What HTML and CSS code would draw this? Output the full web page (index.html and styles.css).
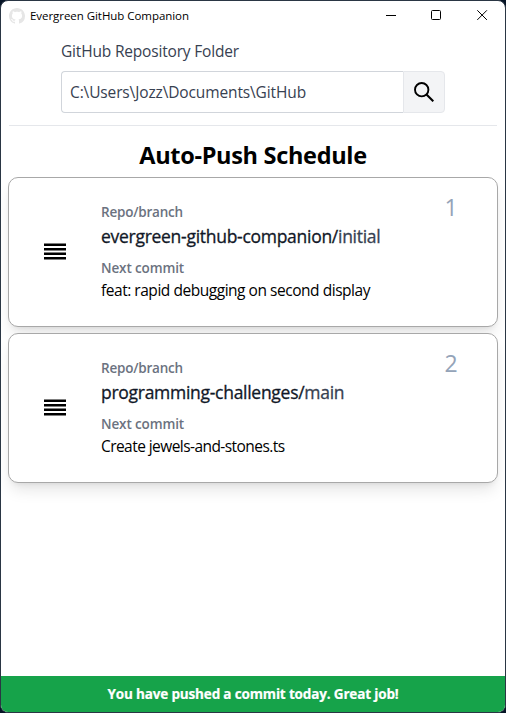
FILE: index.html
```
<!DOCTYPE html>
<html lang="en">
<head>
<meta charset="utf-8">
<title>Evergreen GitHub Companion</title>
<link rel="stylesheet" href="styles.css">
</head>
<body>
<div class="window">
  <header class="titlebar">
    <svg class="logo" viewBox="0 0 16 16" fill="#e6e6e6"><path d="M8 0C3.58 0 0 3.58 0 8c0 3.54 2.29 6.53 5.47 7.59.4.07.55-.17.55-.38 0-.19-.01-.82-.01-1.49-2.01.37-2.53-.49-2.69-.94-.09-.23-.48-.94-.82-1.13-.28-.15-.68-.52-.01-.53.63-.01 1.08.58 1.23.82.72 1.21 1.87.87 2.33.66.07-.52.28-.87.51-1.07-1.78-.2-3.64-.89-3.64-3.95 0-.87.31-1.59.82-2.15-.08-.2-.36-1.02.08-2.12 0 0 .67-.21 2.2.82.64-.18 1.32-.27 2-.27s1.36.09 2 .27c1.53-1.04 2.2-.82 2.2-.82.44 1.1.16 1.92.08 2.12.51.56.82 1.27.82 2.15 0 3.07-1.87 3.75-3.65 3.95.29.25.54.73.54 1.48 0 1.07-.01 1.93-.01 2.2 0 .21.15.46.55.38A8.01 8.01 0 0 0 16 8c0-4.42-3.58-8-8-8z"/></svg>
    <span class="app-name">Evergreen GitHub Companion</span>
    <div class="controls">
      <svg viewBox="0 0 46 30"><path d="M16 14.5h10" shape-rendering="crispEdges"/></svg>
      <svg viewBox="0 0 46 30"><rect x="15.5" y="9.5" width="9" height="9" rx="1"/></svg>
      <svg viewBox="0 0 46 30"><path d="M15.3 9.3l9.6 9.6M24.9 9.3l-9.6 9.6"/></svg>
    </div>
  </header>
  <section class="folder">
    <label class="folder-label" for="path">GitHub Repository Folder</label>
    <div class="field">
      <div class="path" id="path">C:\Users\Jozz\Documents\GitHub</div>
      <button class="browse" aria-label="Browse">
        <svg viewBox="0 0 20 20" fill="none" stroke="#000" stroke-width="1.9"><circle cx="7.7" cy="7.7" r="6.7"/><path d="M12.5 12.5l6.8 6.8" stroke-width="2.1"/></svg>
      </button>
    </div>
  </section>
  <hr class="divider">
  <h1 class="heading">Auto-Push Schedule</h1>
  <main class="cards">
    <article class="card">
      <svg class="handle" viewBox="0 0 22 17"><path d="M0 1.8h22M0 6.3h22M0 10.8h22M0 15.3h22"/></svg>
      <div class="info">
        <div class="caption">Repo/branch</div>
        <div class="repo">evergreen-github-companion/<span class="branch">initial</span></div>
        <div class="caption next">Next commit</div>
        <div class="commit">feat: rapid debugging on second display</div>
      </div>
      <div class="order">1</div>
    </article>
    <article class="card">
      <svg class="handle" viewBox="0 0 22 17"><path d="M0 1.8h22M0 6.3h22M0 10.8h22M0 15.3h22"/></svg>
      <div class="info">
        <div class="caption">Repo/branch</div>
        <div class="repo">programming-challenges/<span class="branch">main</span></div>
        <div class="caption next">Next commit</div>
        <div class="commit create">Create jewels-and-stones.ts</div>
      </div>
      <div class="order">2</div>
    </article>
  </main>
  <footer class="status">You have pushed a commit today. Great job!</footer>
</div>
</body>
</html>
```
FILE: styles.css
```
* { box-sizing: border-box; }
body { margin: 0; background: #061426; font-family: "Open Sans", sans-serif; color: #000; }
.window {
  height: 713px;
  display: flex;
  flex-direction: column;
  background: #fff;
  border: 1px solid #2a3644;
  border-radius: 8px;
  overflow: hidden;
}
.titlebar { display: flex; align-items: center; height: 30px; padding-left: 8px; flex: none; }
.logo { width: 16px; height: 16px; }
.app-name { margin: -1px 0 0 5px; font-size: 11.5px; letter-spacing: -0.049px; white-space: nowrap; }
.controls { display: flex; margin-left: auto; margin-right: -3px; }
.controls svg { width: 46px; height: 30px; fill: none; stroke: #000; stroke-width: 1; }
.folder { margin: 8px 60px 0; }
.folder-label {
  display: block;
  height: 24px;
  font-size: 15.5px;
  line-height: 24px;
  letter-spacing: -0.178px;
  color: #374151;
}
.field { display: flex; width: 384px; height: 42px; margin-top: 8px; }
.path {
  flex: 1;
  padding-left: 8px;
  border: 1px solid #d1d5db;
  border-right: 0;
  border-radius: 4px 0 0 4px;
  font-size: 15.5px;
  line-height: 41px;
  letter-spacing: -0.127px;
  color: #374151;
}
.browse {
  display: flex;
  align-items: center;
  justify-content: center;
  width: 42px;
  padding: 0;
  border: 1px solid #e5e7eb;
  border-radius: 0 4px 4px 0;
  background: #f3f4f6;
}
.browse svg { width: 20px; height: 20px; }
.divider { width: 488px; height: 1px; margin: 12px 0 0 8px; border: 0; background: #e5e7eb; flex: none; }
.heading {
  margin: 13px 0 1px;
  font-size: 23.5px;
  line-height: 32px;
  letter-spacing: -0.313px;
  text-align: center;
}
.cards { display: flex; flex-direction: column; gap: 6px; padding: 5px 7px 0; }
.card {
  display: flex;
  height: 150px;
  border: 1px solid #a8a8a8;
  border-radius: 10px;
  background: #fff;
  box-shadow: 0 10px 15px -3px rgba(0, 0, 0, .1), 0 4px 6px -4px rgba(0, 0, 0, .1);
}
.handle { width: 22px; height: 17px; margin: 65px 35px 0; stroke: #000; stroke-width: 2.5; }
.info { flex: 1; padding-top: 24px; white-space: nowrap; }
.caption { font-size: 13.5px; font-weight: 600; line-height: 20px; letter-spacing: -0.203px; color: #6b7280; }
.next { margin-top: 8px; letter-spacing: -0.132px; }
.repo {
  font-size: 17.5px;
  font-weight: 500;
  line-height: 28px;
  letter-spacing: -0.28px;
  color: #111827;
  -webkit-text-stroke: 0.3px;
}
.branch { color: #374151; }
.commit { font-size: 15.5px; line-height: 25px; letter-spacing: -0.466px; }
.create { letter-spacing: -0.56px; }
.order { width: 14px; margin: 13px 39px 0 0; font-size: 23px; line-height: 32px; text-align: center; color: #94a3b8; }
.status {
  height: 36px;
  margin-top: auto;
  flex: none;
  background: #16a34a;
  color: #fff;
  font-size: 13.5px;
  font-weight: 700;
  line-height: 36px;
  letter-spacing: -0.157px;
  text-align: center;
  -webkit-text-stroke: 0.2px;
}
```
